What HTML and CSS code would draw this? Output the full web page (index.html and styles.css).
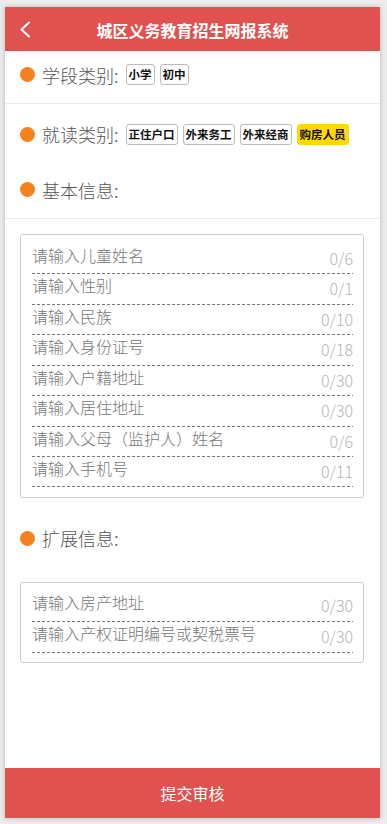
FILE: index.html
```html
<!DOCTYPE html>
<html lang="zh-CN">
<head>
<meta charset="utf-8">
<title>城区义务教育招生网报系统</title>
<link rel="stylesheet" href="styles.css">
</head>
<body>
<div class="app">
  <header class="topbar">
    <span class="back">
      <svg width="12" height="17" viewBox="0 0 12 17"><path d="M10 1.5 L2.5 8.5 L10 15.5" fill="none" stroke="#fff" stroke-width="2" stroke-linecap="round" stroke-linejoin="round"/></svg>
    </span>
    <h1 class="title">城区义务教育招生网报系统</h1>
    <span class="back-spacer"></span>
  </header>

  <main class="content">
    <div class="heading row-stage">
      <span class="dot"></span>
      <span class="label">学段类别:</span>
      <div class="tags">
        <span class="tag">小学</span>
        <span class="tag">初中</span>
      </div>
    </div>

    <div class="heading row-type">
      <span class="dot"></span>
      <span class="label">就读类别:</span>
      <div class="tags">
        <span class="tag">正住户口</span>
        <span class="tag">外来务工</span>
        <span class="tag">外来经商</span>
        <span class="tag tag-active">购房人员</span>
      </div>
    </div>

    <div class="heading row-basic">
      <span class="dot"></span>
      <span class="label">基本信息:</span>
    </div>

    <div class="form-box box-basic">
      <div class="field"><span class="ph">请输入儿童姓名</span><span class="count">0/6</span></div>
      <div class="field"><span class="ph">请输入性别</span><span class="count">0/1</span></div>
      <div class="field"><span class="ph">请输入民族</span><span class="count">0/10</span></div>
      <div class="field"><span class="ph">请输入身份证号</span><span class="count">0/18</span></div>
      <div class="field"><span class="ph">请输入户籍地址</span><span class="count">0/30</span></div>
      <div class="field"><span class="ph">请输入居住地址</span><span class="count">0/30</span></div>
      <div class="field"><span class="ph">请输入父母（监护人）姓名</span><span class="count">0/6</span></div>
      <div class="field"><span class="ph">请输入手机号</span><span class="count">0/11</span></div>
    </div>

    <div class="heading row-ext">
      <span class="dot"></span>
      <span class="label">扩展信息:</span>
    </div>

    <div class="form-box box-ext">
      <div class="field field-ext"><span class="ph">请输入房产地址</span><span class="count">0/30</span></div>
      <div class="field field-ext"><span class="ph">请输入产权证明编号或契税票号</span><span class="count">0/30</span></div>
    </div>
  </main>

  <footer class="submit">提交审核</footer>
</div>
</body>
</html>
```

FILE: styles.css
```css
html, body {
  margin: 0;
  padding: 0;
}
body {
  background: #ececec;
  font-family: "Noto Sans CJK SC", "Noto Sans", sans-serif;
  width: 387px;
  height: 824px;
  overflow: hidden;
}
.app {
  margin: 7px 0 0 5px;
  width: 375px;
  height: 811px;
  background: #fff;
  box-shadow: 0 0 5px rgba(0, 0, 0, 0.22);
  display: flex;
  flex-direction: column;
}
.topbar {
  height: 44px;
  background: #e0524f;
  display: flex;
  align-items: center;
  padding: 0 12px;
  box-sizing: border-box;
}
.back {
  width: 20px;
  display: flex;
  align-items: center;
  padding-left: 2px;
  padding-top: 1px;
}
.back-spacer {
  width: 22px;
}
.title {
  flex: 1;
  margin: 0;
  text-align: center;
  color: #fff;
  font-size: 16px;
  font-weight: bold;
  line-height: 44px;
  padding-top: 2px;
}
.content {
  flex: 1;
  display: flex;
  flex-direction: column;
}
.heading {
  display: flex;
  align-items: center;
  padding: 0 15px;
  box-sizing: border-box;
}
.dot {
  width: 15px;
  height: 15px;
  border-radius: 50%;
  background: #f5821f;
  flex: none;
}
.label {
  margin-left: 7px;
  font-size: 18px;
  font-weight: 300;
  color: #555;
  line-height: 24px;
}
.tags {
  display: flex;
  gap: 5px;
  margin-left: 7px;
}
.tag {
  font-size: 11.5px;
  font-weight: bold;
  color: #111;
  border: 1px solid #bbb;
  border-radius: 3px;
  padding: 0 2px;
  height: 21px;
  line-height: 19px;
  box-sizing: border-box;
}
.tag-active {
  background: #ffd806;
  border-color: #ffd806;
}
.row-stage {
  height: 53px;
  padding-bottom: 5px;
  border-bottom: 1px solid #ececec;
}
.row-type {
  height: 60px;
}
.row-basic {
  height: 55px;
  padding-bottom: 3px;
  border-bottom: 1px solid #ececec;
}
.form-box {
  margin: 15px 16px 0 15px;
  border: 1px solid #ccc;
  border-radius: 3px;
  padding: 9px 10px 10px 11px;
}
.field {
  height: 30.43px;
  display: flex;
  justify-content: space-between;
  align-items: flex-start;
  background-image: repeating-linear-gradient(to right, #777 0 3px, transparent 3px 5px);
  background-size: 100% 1px;
  background-position: left bottom;
  background-repeat: no-repeat;
  box-sizing: border-box;
}
.ph {
  font-size: 16px;
  font-weight: 300;
  color: #777;
  line-height: 22px;
}
.count {
  font-size: 16px;
  font-weight: 300;
  color: #b5b5b5;
  line-height: 22px;
  margin-top: 3px;
}
.row-ext {
  margin-top: 14px;
  height: 52px;
}
.box-ext {
  margin-top: 18px;
  padding-top: 8px;
  padding-bottom: 9px;
}
.field-ext {
  height: 31px;
}
.submit {
  height: 50px;
  background: #e0524f;
  color: #fff;
  font-size: 16px;
  text-align: center;
  line-height: 50px;
}
```
